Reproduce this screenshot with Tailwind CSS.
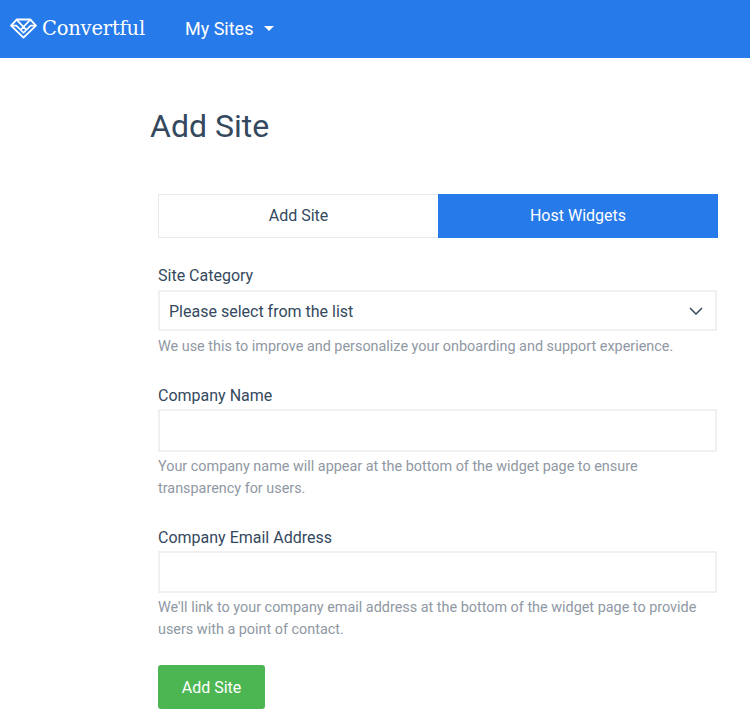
<!DOCTYPE html>
<html lang="en">
<head>
    <meta charset="UTF-8">
    <title>Add Site</title>
    <script src="https://cdn.jsdelivr.net/npm/@tailwindcss/browser@4"></script>
</head>
<body class="bg-white font-['Roboto',sans-serif] text-[#34495e]">
    <!-- Header -->
    <header class="h-[58px] bg-[#277ae9] flex items-center pl-[10px] pb-[2px] text-white">
        <svg class="w-[27px] h-[21px]" viewBox="0 0 28 22" fill="none" stroke="white" stroke-width="2" stroke-linejoin="round">
            <path d="M7 1.5H21L27 8L14 20.5L1 8Z"/>
            <path d="M7 2L17 12.5M21 2L11 12.5M1.5 8H6.5L14 15.5L21.5 8H26.5" stroke-width="1.7"/>
        </svg>
        <span class="ml-[5px] mt-[2px] font-['DejaVu_Serif',serif] text-[19.5px] tracking-[-0.2px]">Convertful</span>
        <span class="ml-[40px] text-[18px]">My Sites</span>
        <span class="ml-[11px] mt-[1px] w-0 h-0 border-x-[5px] border-x-transparent border-t-[5px] border-t-white"></span>
    </header>

    <main class="pl-[150px] pr-[32px]">
        <h1 class="pt-[49px] text-[32px] leading-[38px] text-[#34495e]">Add Site</h1>

        <div class="mt-[49px] ml-[8px]">
            <!-- Tabs -->
            <div class="flex h-[44px] text-[16px]">
                <div class="w-[280px] flex items-center justify-center border border-[#e9e9e9] border-r-0">Add Site</div>
                <div class="flex-1 flex items-center justify-center bg-[#277ae9] text-white">Host Widgets</div>
            </div>

            <form>
                <label class="block mt-[28px] text-[16px] leading-[19px]">Site Category</label>
                <div class="mt-[5px] mr-[1px] h-[41px] flex items-center justify-between border-2 border-[#f0f0f0] pl-[9px] pr-[12px] text-[16px]">
                    <span class="pt-[2px]">Please select from the list</span>
                    <svg class="w-[14px] h-[8px]" viewBox="0 0 14 8" fill="none" stroke="#34495e" stroke-width="1.5"><path d="M1 1L7 7L13 1"/></svg>
                </div>
                <p class="mt-[5px] text-[14.4px] leading-[21px] text-[#8f98a3]">We use this to improve and personalize your onboarding and support experience.</p>

                <label class="block mt-[29px] text-[16px] leading-[19px]">Company Name</label>
                <input type="text" class="block mt-[4px] w-[559px] h-[43px] border-2 border-[#f0f0f0]">
                <p class="mt-[4px] text-[14.4px] leading-[22px] text-[#8f98a3]">Your company name will appear at the bottom of the widget page to ensure<br>transparency for users.</p>

                <label class="block mt-[28px] text-[16px] leading-[19px]">Company Email Address</label>
                <input type="text" class="block mt-[4px] w-[559px] h-[42px] border-2 border-[#f0f0f0]">
                <p class="mt-[4px] text-[14.4px] leading-[22px] text-[#8f98a3]">We'll link to your company email address at the bottom of the widget page to provide<br>users with a point of contact.</p>

                <button type="button" class="block mt-[24px] w-[107px] h-[44px] pt-[2px] rounded-[3px] bg-[#4cb652] text-white text-[16px]">Add Site</button>
            </form>
        </div>
    </main>
</body>
</html>
